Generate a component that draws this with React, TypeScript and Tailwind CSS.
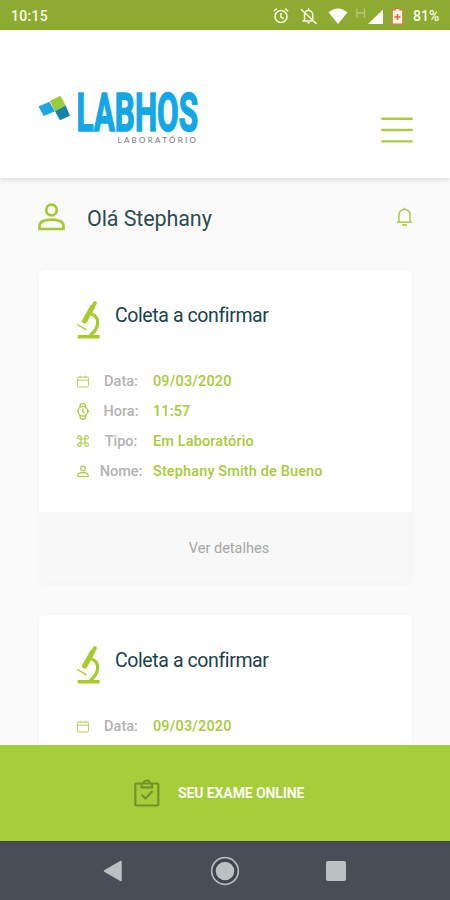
import type { ReactNode } from 'react'

interface Exam {
  id: number
  rows: { label: string; value: string; icon: ReactNode }[]
}

function CalendarIcon() {
  return (
    <svg width="12" height="13" viewBox="0 0 12 13" fill="none" stroke="#b3d155" strokeWidth="1">
      <rect x="0.5" y="2" width="11" height="10" rx="1.2" />
      <path d="M0.5 5.2h11M3.2 0.6v2.6M8.8 0.6v2.6" />
    </svg>
  )
}

function WatchIcon() {
  return (
    <svg width="12" height="17" viewBox="0 0 12 17" fill="none" stroke="#a9cb3f" strokeWidth="1.3">
      <circle cx="5.8" cy="8.3" r="4.9" />
      <path d="M2.8 4.2l.6-2.7q.2-.7 1-.7h2.9q.8 0 1 .7l.6 2.7M2.8 12.4l.6 2.8q.2.8 1 .8h2.9q.8 0 1-.8l.6-2.8M5.8 5.6v2.9l1.6 1.5M11.4 7.2v2" />
    </svg>
  )
}

function CommandIcon() {
  return (
    <svg width="12" height="12" viewBox="0 0 12 12" fill="none" stroke="#a9cb3f" strokeWidth="1.1">
      <path d="M4 4V2.4A1.7 1.7 0 1 0 2.3 4h7.4A1.7 1.7 0 1 0 8 2.4v7.2A1.7 1.7 0 1 0 9.7 8H2.3A1.7 1.7 0 1 0 4 9.6V4" />
    </svg>
  )
}

function PersonIcon({ small = false }: { small?: boolean }) {
  if (small) {
    return (
      <svg width="12" height="13" viewBox="0 0 12 13" fill="none" stroke="#a9cb3f" strokeWidth="1.1">
        <circle cx="6" cy="3.5" r="2.4" />
        <path d="M.8 11.500v-1.200c0-2 2.700-2.700 5.200-2.700s5.200.7 5.200 2.700v1.200z" />
      </svg>
    )
  }
  return (
    <svg width="27" height="28" viewBox="0 0 27 28" fill="none" stroke="#a6c933" strokeWidth="2.7">
      <circle cx="13.5" cy="7" r="5.3" />
      <path d="M1.5 26v-3.500c0-4 6-5.800 12-5.800s12 1.800 12 5.800V26z" />
    </svg>
  )
}

function Microscope() {
  return (
    <svg width="25" height="38" viewBox="0 0 25 38" fill="none" stroke="#a8cb2c">
      <path d="M18.900 2.200L17 5.500" strokeWidth="4" strokeLinecap="round" />
      <path d="M17 5L8.300 20.500" strokeWidth="5.200" />
      <path d="M8.300 20L7.300 22" strokeWidth="4.400" />
      <path d="M15.300 12.800c4.800 1.900 6.800 5.500 6.300 10-.5 4.600-3 8.200-7.500 11.800" strokeWidth="3.200" />
      <path d="M1 23.300l9.500 5.600" strokeWidth="1.300" />
      <path d="M1.700 35.700h22" strokeWidth="3.600" />
    </svg>
  )
}

const exams: Exam[] = [1, 2].map((id) => ({
  id,
  rows: [
    { label: 'Data:', value: '09/03/2020', icon: <CalendarIcon /> },
    { label: 'Hora:', value: '11:57', icon: <WatchIcon /> },
    { label: 'Tipo:', value: 'Em Laboratório', icon: <CommandIcon /> },
    { label: 'Nome:', value: 'Stephany Smith de Bueno', icon: <PersonIcon small /> },
  ],
}))

function StatusBar() {
  return (
    <div className="flex h-[30px] shrink-0 items-center justify-between bg-[#8dab30] pl-[11px] pr-[9px] text-[14px] font-medium text-[#f6fae8]">
      <span className="pt-0.5 tracking-[0.3px]">10:15</span>
      <div className="flex items-center pt-0.5">
        <svg width="134" height="20" viewBox="0 0 134 20" fill="none" stroke="#f6fae8" strokeWidth="1.5">
          {/* alarm */}
          <circle cx="8" cy="10.5" r="6" />
          <path d="M8 7v4l2.600 1.600M.8 5.200L4 2.600M15.200 5.200L12 2.600" />
          {/* muted bell */}
          <path d="M31.500 14.500V8.800c0-2.400 1.600-4.200 4-4.200s4.200 1.800 4.200 4.200v5.200M29.500 15h11.500M28 3.200l15.500 14.600M35.600 2.200v2.400" />
          <path d="M34 16.300h3.200q-.5 1.500-1.600 1.500t-1.600-1.500z" fill="#f6fae8" stroke="none" />
          {/* wifi, signal */}
          <path d="M55.500 6.300Q65 -1.500 74.500 6.300L65 18z" fill="#fff" stroke="none" />
          <path d="M84 2.500v9M91.500 2.500v9M84 7h7.500" stroke="#b3c878" strokeWidth="1.4" />
          <path d="M110 3.500V18H95z" fill="#fff" stroke="none" />
          {/* battery */}
          <path
            d="M120 4h2.300V2.300h4.400V4h2.300q.8 0 .8.800v12.400q0 .8-.8.800h-9q-.8 0-.8-.8V4.800q0-.8.800-.8z"
            fill="#fff4e8"
            stroke="#e2763d"
            strokeWidth="1.2"
          />
          <path d="M124.500 8v6M121.500 11h6" stroke="#e2672d" strokeWidth="1.6" />
        </svg>
        <span className="ml-[6px] w-[28px] whitespace-nowrap text-[14px]">81%</span>
      </div>
    </div>
  )
}

function Header() {
  return (
    <header className="z-10 flex h-[148px] shrink-0 justify-between bg-white pl-[38px] pr-[37px] shadow-[0_2px_5px_rgba(0,0,0,0.12)]">
      <svg className="mt-[60px]" width="164" height="58" viewBox="0 0 164 58">
        <path d="M.5 16.500l10.800-4.700L17 21.300 5.800 26z" fill="#1ba5e2" />
        <path d="M11.800 11l10.700-5.300 5.200 9.800L17 21.300z" fill="#9bca3c" />
        <path d="M27.700 15.500L32 25.700l-10 4.600-5-9z" fill="#1583a8" />
        <text
          x="38.5"
          y="41.3"
          textLength="121.5"
          lengthAdjust="spacingAndGlyphs"
          className="fill-[#12a7e6] stroke-[#12a7e6] stroke-[1.6px] font-[Roboto] text-[53px] font-bold"
        >
          LABHOS
        </text>
        <text x="79.5" y="52.5" textLength="78.5" className="fill-[#777] font-[Lato] text-[8px]">
          LABORATÓRIO
        </text>
      </svg>
      <svg className="mt-[86px]" width="32" height="28" viewBox="0 0 32 28" stroke="#a9cb45" strokeWidth="2.4" strokeLinecap="round">
        <path d="M1.200 2.800h29.600M1.200 14h29.600M1.200 25.400h29.600" />
      </svg>
    </header>
  )
}

function ExamCard({ exam }: { exam: Exam }) {
  return (
    <article className="w-[373px] shrink-0 overflow-hidden rounded-md bg-white shadow-[0_1px_5px_rgba(0,0,0,0.04)]">
      <div className="h-[242px] pl-[37px] pt-[31px]">
        <div className="flex h-[38px]">
          <Microscope />
          <h2 className="ml-[14px] text-[19.500px] leading-[30px] tracking-[-0.4px] text-[#184349]">Coleta a confirmar</h2>
        </div>
        <ul className="mt-[27px]">
          {exam.rows.map((row) => (
            <li key={row.label} className="flex h-[30px] items-center text-[14.500px] font-medium">
              <span className="flex w-[13px] justify-center">{row.icon}</span>
              <span className="ml-[8px] w-[48px] pt-0.5 text-center text-[#b3b3b3]">{row.label}</span>
              <span className="ml-[8px] whitespace-nowrap pt-0.5 tracking-[0.13px] text-[#a9cb3a]">{row.value}</span>
            </li>
          ))}
        </ul>
      </div>
      <button className="flex h-[71px] w-full items-center justify-center bg-[#f8f8f8] pl-[7px] pt-[2px] text-[14.500px] text-[#a6a6a6]">
        Ver detalhes
      </button>
    </article>
  )
}

function NavBar() {
  return (
    <nav className="flex h-[59px] shrink-0 items-center justify-between border-t border-[#3c4936] bg-[#474e57] pl-[103px] pr-[104px]">
      <svg width="20" height="22" viewBox="0 0 20 22">
        <path d="M1.500 11L18 1.500v19z" fill="#bac1c3" stroke="#bac1c3" strokeWidth="1.5" strokeLinejoin="round" />
      </svg>
      <svg width="30" height="30" viewBox="0 0 30 30">
        <circle cx="15" cy="15" r="13.3" fill="#3d444b" stroke="#b2b9bc" strokeWidth="1.7" />
        <circle cx="15" cy="15" r="9.3" fill="#bac1c3" />
      </svg>
      <span className="h-[20px] w-[20px] rounded-[2px] bg-[#bac1c3]" />
    </nav>
  )
}

export default function App() {
  return (
    <div className="flex h-[900px] w-[450px] flex-col overflow-hidden bg-[#fafafa] font-[Roboto,sans-serif]">
      <StatusBar />
      <Header />
      <main className="flex min-h-0 flex-1 flex-col overflow-hidden pl-[39px]">
        <div className="flex h-[92px] shrink-0 items-start pr-[37px] pt-[25px]">
          <span className="-ml-px">
            <PersonIcon />
          </span>
          <h1 className="ml-[22px] flex-1 text-[21.500px] leading-[32px] tracking-[-0.1px] text-[#2a4d52]">Olá Stephany</h1>
          <svg className="mt-1" width="17" height="20" viewBox="0 0 17 20" fill="none" stroke="#a9cb45" strokeWidth="1.5">
            <path d="M1 15.200h15M3 15V8.500C3 4.800 5.200 2.500 8.500 2.500s5.500 2.300 5.500 6V15M8.500 2.300V.8" />
            <path d="M6.800 17.800h3.400" strokeWidth="1.8" strokeLinecap="round" />
          </svg>
        </div>
        <div className="flex flex-col gap-8">
          {exams.map((exam) => (
            <ExamCard key={exam.id} exam={exam} />
          ))}
        </div>
      </main>
      <button className="flex h-[96px] shrink-0 items-center bg-[#a5ce3a] pl-[134px] text-[14px] font-bold tracking-[-0.1px] text-[#fbfdf2]">
        <svg width="26" height="28" viewBox="0 0 26 28" fill="none" stroke="#73932a" strokeWidth="2.2">
          <rect x="1.3" y="4.5" width="23" height="22" rx="1" />
          <path d="M7.500 5v3.300h10.600V5M9.300 4.500c.8-4 6.200-4 7 0M7.500 15.500l4 4 7-7.500" />
        </svg>
        <span className="ml-[18px] whitespace-nowrap pt-px">SEU EXAME ONLINE</span>
      </button>
      <NavBar />
    </div>
  )
}
